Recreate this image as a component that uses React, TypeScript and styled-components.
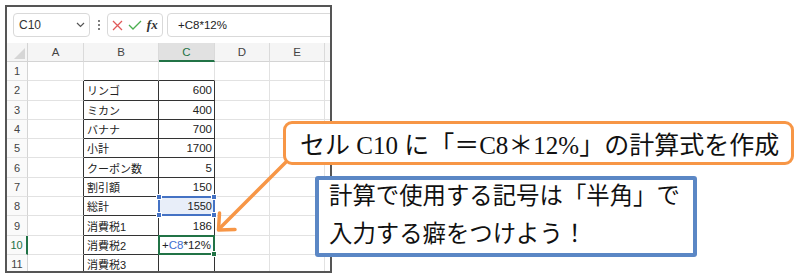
import React from 'react';
import styled, { createGlobalStyle } from 'styled-components';

const GlobalStyle = createGlobalStyle`
  html, body {
    margin: 0;
    padding: 0;
    background: #fff;
  }
  body {
    width: 798px;
    height: 277px;
    overflow: hidden;
    font-family: "Liberation Sans", "Noto Sans CJK JP", sans-serif;
  }
`;

const Page = styled.div`
  position: relative;
  width: 798px;
  height: 277px;
  box-sizing: border-box;
  padding: 5px 0 0 5px;
`;

const Sheet = styled.div`
  width: 327px;
  height: 268px;
  box-sizing: border-box;
  border: 2px solid #555;
  overflow: hidden;
  background: #fff;
  display: flex;
  flex-direction: column;
`;

const FormulaBar = styled.div`
  flex: none;
  height: 36px;
  box-sizing: border-box;
  padding: 6px 0 0 6px;
  display: flex;
  align-items: flex-start;
`;

const Box = styled.div<{ $w?: number }>`
  flex: none;
  width: ${(p) => (p.$w ? `${p.$w}px` : 'auto')};
  height: 24px;
  box-sizing: border-box;
  border: 1px solid #d9d9d9;
  border-radius: 4px;
  background: #fff;
  display: flex;
  align-items: center;
`;

const NameBox = styled(Box)`
  justify-content: space-between;
  padding: 0 4px 0 5px;
  font-size: 12px;
  color: #333;
`;

const Dots = styled.div`
  flex: none;
  width: 17px;
  height: 24px;
  display: flex;
  flex-direction: column;
  align-items: center;
  justify-content: center;
  gap: 2px;

  span {
    width: 2px;
    height: 2px;
    background: #555;
    border-radius: 1px;
  }
`;

const IconBox = styled(Box)`
  justify-content: space-around;
  padding: 0 2px;
`;

const Fx = styled.span`
  font-family: "Liberation Serif", serif;
  font-style: italic;
  font-weight: bold;
  font-size: 13px;
  color: #333;
  margin-top: -1px;
`;

const FormulaInput = styled(Box)`
  margin-left: 4px;
  width: 220px;
  padding-left: 10px;
  font-size: 11.5px;
  color: #222;
`;

const Grid = styled.div`
  display: grid;
  grid-template-columns: 21px 56px 75px 56px 55px 55px 30px;
  grid-template-rows: 19px repeat(11, 19.3px);
`;

const Cell = styled.div<{ $dr?: boolean; $db?: boolean; $right?: boolean; $fill?: string }>`
  position: relative;
  box-sizing: border-box;
  border-right: 1px solid ${(p) => (p.$dr ? '#333' : '#e2e2e2')};
  border-bottom: 1px solid ${(p) => (p.$db ? '#333' : '#e2e2e2')};
  background: ${(p) => p.$fill || 'transparent'};
  display: flex;
  align-items: center;
  justify-content: ${(p) => (p.$right ? 'flex-end' : 'flex-start')};
  padding: 0 2px 0 3px;
  font-size: 11px;
  color: #222;
  white-space: nowrap;
`;

const ColHead = styled.div<{ $active?: boolean }>`
  box-sizing: border-box;
  background: ${(p) => (p.$active ? '#e1e1e1' : '#f5f5f5')};
  border-right: 1px solid #dadada;
  border-bottom: ${(p) => (p.$active ? '2px solid #217346' : '1px solid #d4d4d4')};
  display: flex;
  align-items: center;
  justify-content: center;
  font-size: 11.5px;
  color: ${(p) => (p.$active ? '#217346' : '#444')};
`;

const Corner = styled.div`
  box-sizing: border-box;
  background: #f5f5f5;
  border-right: 1px solid #d4d4d4;
  border-bottom: 1px solid #d4d4d4;
  display: flex;
  align-items: flex-end;
  justify-content: flex-end;
  padding: 0 2px 2px 0;
`;

const RowHead = styled.div<{ $active?: boolean }>`
  box-sizing: border-box;
  background: #fafafa;
  border-right: ${(p) => (p.$active ? '2px solid #217346' : '1px solid #d4d4d4')};
  border-bottom: 1px solid #e2e2e2;
  display: flex;
  align-items: center;
  justify-content: center;
  font-size: 11px;
  color: ${(p) => (p.$active ? '#217346' : '#444')};
`;

const Selection = styled.div<{ $color: string; $w: number }>`
  position: absolute;
  z-index: 2;
  top: -1px;
  left: -1px;
  right: -1px;
  bottom: -1px;
  border: ${(p) => p.$w}px solid ${(p) => p.$color};
  pointer-events: none;
`;

const Handle = styled.span<{ $color: string; $x: 'l' | 'r'; $y: 't' | 'b' }>`
  position: absolute;
  width: 4px;
  height: 4px;
  background: ${(p) => p.$color};
  border: 1px solid #fff;
  ${(p) => (p.$x === 'l' ? 'left: -4px;' : 'right: -4px;')}
  ${(p) => (p.$y === 't' ? 'top: -4px;' : 'bottom: -4px;')}
`;

const Ref = styled.span`
  color: #3f6fd1;
`;

const Overlay = styled.svg`
  position: absolute;
  left: 0;
  top: 0;
  pointer-events: none;
`;

const OrangeCallout = styled.div`
  position: absolute;
  left: 283px;
  top: 121px;
  width: 511px;
  height: 44px;
  box-sizing: border-box;
  border: 3px solid #f79646;
  border-radius: 9px;
  background: #fff;
  display: flex;
  align-items: center;
  padding-left: 14px;
  font-family: "Liberation Serif", "Noto Sans CJK JP", serif;
  font-size: 25px;
  color: #111;
  white-space: nowrap;
`;

const BlueCallout = styled.div`
  position: absolute;
  left: 315px;
  top: 176px;
  width: 382px;
  height: 81px;
  box-sizing: border-box;
  border: 4px solid #5b87c5;
  border-radius: 3px;
  background: #fff;
  display: flex;
  flex-direction: column;
  gap: 10px;
  padding-left: 10px;
  font-family: "Noto Sans CJK JP", sans-serif;
  font-size: 23.4px;
  line-height: 28px;
  color: #111;
  white-space: nowrap;
`;

const cols = ['A', 'B', 'C', 'D', 'E', ''];

const rows: { b?: string; c?: string }[] = [
  {},
  { b: 'リンゴ', c: '600' },
  { b: 'ミカン', c: '400' },
  { b: 'バナナ', c: '700' },
  { b: '小計', c: '1700' },
  { b: 'クーポン数', c: '5' },
  { b: '割引額', c: '150' },
  { b: '総計', c: '1550' },
  { b: '消費税1', c: '186' },
  { b: '消費税2' },
  { b: '消費税3' },
];

const renderCell = (r: number, col: string, idx: number) => {
  const inTable = r >= 2 && r <= 11;
  const data = rows[r - 1];
  const key = `${idx}-${r}`;
  if (col === 'A') return <Cell key={key} $dr={inTable} />;
  if (col === 'B') return <Cell key={key} $dr={inTable} $db>{data.b}</Cell>;
  if (col === 'C') {
    if (r === 8) {
      return (
        <Cell key={key} $dr $db $right $fill="#e8eef9">
          {data.c}
          <Selection $color="#4472c4" $w={2}>
            <Handle $color="#4472c4" $x="l" $y="t" />
            <Handle $color="#4472c4" $x="r" $y="t" />
            <Handle $color="#4472c4" $x="l" $y="b" />
            <Handle $color="#4472c4" $x="r" $y="b" />
          </Selection>
        </Cell>
      );
    }
    if (r === 10) {
      return (
        <Cell key={key} $dr $db style={{ fontSize: '11.5px' }}>
          +<Ref>C8</Ref>*12%
          <Selection $color="#217346" $w={2}>
            <Handle $color="#217346" $x="r" $y="b" />
          </Selection>
        </Cell>
      );
    }
    return (
      <Cell key={key} $dr={inTable} $db $right style={{ fontSize: '11.5px' }}>
        {data.c}
      </Cell>
    );
  }
  return <Cell key={key} />;
};

const App = () => {
  return (
    <Page>
      <GlobalStyle />
      <Sheet>
        <FormulaBar>
          <NameBox $w={77}>
            <span>C10</span>
            <svg width="9" height="6" viewBox="0 0 9 6">
              <path d="M1 1l3.5 3.5L8 1" fill="none" stroke="#555" strokeWidth="1.2" />
            </svg>
          </NameBox>
          <Dots>
            <span />
            <span />
            <span />
          </Dots>
          <IconBox $w={56}>
            <svg width="11" height="11" viewBox="0 0 11 11">
              <path d="M1 1l9 9M10 1l-9 9" stroke="#e05a5a" strokeWidth="1.3" />
            </svg>
            <svg width="14" height="10" viewBox="0 0 14 10">
              <path d="M1 5l4 4 8-8" fill="none" stroke="#4caf50" strokeWidth="1.3" />
            </svg>
            <Fx>fx</Fx>
          </IconBox>
          <FormulaInput>+C8*12%</FormulaInput>
        </FormulaBar>
        <Grid>
          <Corner>
            <svg width="11" height="11" viewBox="0 0 11 11">
              <path d="M11 0V11H0Z" fill="#d6d6d6" />
            </svg>
          </Corner>
          {cols.map((c, i) => (
            <ColHead key={i} $active={c === 'C'}>
              {c}
            </ColHead>
          ))}
          {rows.map((_, i) => {
            const r = i + 1;
            return (
              <React.Fragment key={r}>
                <RowHead $active={r === 10}>{r}</RowHead>
                {cols.map((c, ci) => renderCell(r, c, ci))}
              </React.Fragment>
            );
          })}
        </Grid>
      </Sheet>

      <Overlay width="798" height="277" viewBox="0 0 798 277">
        <g fill="none" stroke="#f79646" strokeWidth="3.5" strokeLinecap="round" strokeLinejoin="round">
          <line x1="292" y1="156" x2="219" y2="229" />
          <polyline points="219.5,213 218.5,230 235,229.5" />
        </g>
      </Overlay>

      <OrangeCallout>セル C10 に「＝C8＊12%」の計算式を作成</OrangeCallout>

      <BlueCallout>
        <div>計算で使用する記号は「半角」で</div>
        <div>入力する癖をつけよう！</div>
      </BlueCallout>
    </Page>
  );
};

export default App;
